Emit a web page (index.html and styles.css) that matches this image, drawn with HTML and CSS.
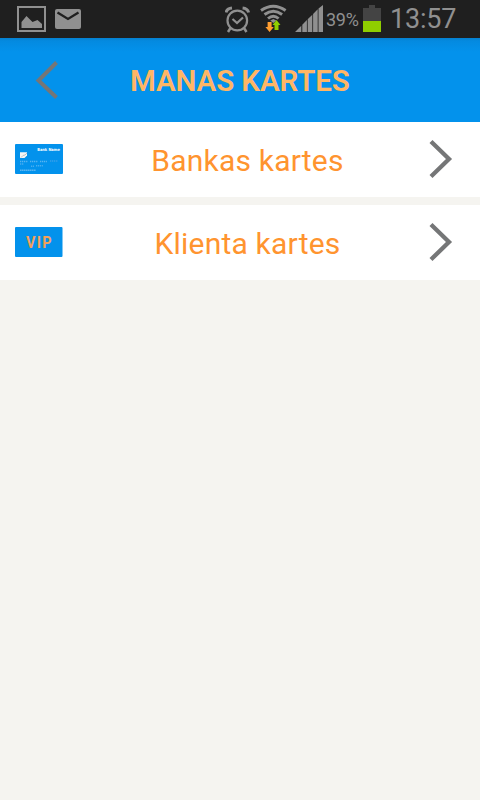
FILE: index.html
```
<!DOCTYPE html>
<html lang="lv">
<head>
  <meta charset="UTF-8">
  <meta name="viewport" content="width=device-width, initial-scale=1.0">
  <title>Manas kartes</title>
  <link rel="stylesheet" href="styles.css">
</head>
<body>
  <div class="status">
    <svg class="picture" width="29" height="38" viewBox="17 0 29 38">
      <rect x="18" y="7" width="27" height="24" fill="none" stroke="#909090" stroke-width="2"/>
      <path d="M21.500 28V22l5-6 6 6 5-2 4.500 4V28z" fill="#909090"/>
    </svg>
    <svg class="mail" width="26" height="38" viewBox="55 0 26 38">
      <rect x="55" y="9" width="26" height="20" rx="2" fill="#909090"/>
      <path d="M57.500 12.500L68 19l10.500-6.500" fill="none" stroke="#1f1f1f" stroke-width="2.300"/>
    </svg>
    <svg class="alarm" width="25" height="38" viewBox="225 0 25 38">
      <g fill="none" stroke="#909090">
        <circle cx="237.300" cy="20.500" r="9.800" stroke-width="2.200"/>
        <path d="M232.500 19l4.500 4 6-5.500" stroke-width="2.200"/>
        <path d="M226 12.500q1-4 6-4.500M248.600 12.500q-1-4-6-4.500" stroke-width="3"/>
        <path d="M230.500 28l-2.500 4M244 28l2.500 4" stroke-width="2.500"/>
      </g>
    </svg>
    <svg class="wifi" width="27" height="38" viewBox="260 0 27 38">
      <g fill="none" stroke="#909090" stroke-width="2.900">
        <path d="M261 10.500q12.300-8.500 24.600 0"/>
        <path d="M264.500 14.500q8.800-6.500 17.600 0"/>
        <path d="M268 18.500q5.300-4.500 10.600 0"/>
      </g>
      <path d="M270.300 20.500l3-1.500 3 1.500-3 2.500z" fill="#909090"/>
      <path d="M267.600 22h4v5h2.200l-4.200 5-4.200-5h2.200z" fill="#ff9d30"/>
      <path d="M274.500 30h4v-5h2l-4-5-4 5h2z" fill="#8fce00"/>
    </svg>
    <svg class="signal" width="28" height="38" viewBox="295 0 28 38">
      <path d="M295 32l6.300-6.300V32zM302.300 24.700l4.600-4.600V32h-4.600zM307.700 19.300l4.600-4.600V32h-4.600zM313.100 13.900l4.600-4.600V32h-4.600zM318.500 8.500L323 5V32h-4.500z" fill="#909090"/>
    </svg>
    <span class="percent">39%</span>
    <svg class="battery" width="18" height="38" viewBox="363 0 18 38">
      <path d="M363 8h6V5h6v3h6v13h-18z" fill="#444"/>
      <path d="M363 21h18v11h-18z" fill="#8fce00"/>
    </svg>
    <span class="time">13:57</span>
  </div>

  <header class="header">
    <svg class="back" width="24" height="40" viewBox="0 0 24 40">
      <path d="M21.500 2.500L3.500 20.500L21.500 37.500" fill="none" stroke="#757677" stroke-width="4"/>
    </svg>
    <h1 class="title">MANAS KARTES</h1>
  </header>

  <main class="list">
    <a class="row">
      <svg class="card" width="48" height="30" viewBox="0 0 48 30">
        <rect width="48" height="30" rx="1" fill="#0392ec"/>
        <text class="bank" x="22.300" y="6.500" textLength="22.500" lengthAdjust="spacingAndGlyphs">Bank Name</text>
        <path d="M5 8.300h7v3.200l-2.500 2.500H5z" fill="#f4f4f4"/>
        <path d="M6 13.500l2-2 2-.5 2-2" fill="none" stroke="#b9c3c9"/>
        <g fill="none" stroke="#58b4f1" stroke-width="1.600">
          <path d="M5 17.500h8M15 17.500h8M25 17.500h7" stroke-dasharray="1.200 .7"/>
          <path d="M35 17h8" stroke="#389fe9" stroke-dasharray="1.200 .7"/>
          <path d="M5 20h4M16 22.200h3M21 21.700h7" stroke="#48adf0" stroke-dasharray="1.200 .7"/>
          <path d="M5 26.300h16" stroke-dasharray="1.600 .4"/>
        </g>
      </svg>
      <span class="name">Bankas kartes</span>
      <svg class="arrow" width="26" height="40" viewBox="0 0 26 40">
        <path d="M2 2.500L20 20L2 37.500" fill="none" stroke="#757677" stroke-width="4.300"/>
      </svg>
    </a>
    <a class="row">
      <svg class="card" width="48" height="30" viewBox="0 0 48 30">
        <rect width="47.500" height="30" rx="1" fill="#0392ec"/>
        <text class="vip" transform="translate(11 21.300) scale(.85 1)">VIP</text>
      </svg>
      <span class="name">Klienta kartes</span>
      <svg class="arrow" width="26" height="40" viewBox="0 0 26 40">
        <path d="M2 2.500L20 20L2 37.500" fill="none" stroke="#757677" stroke-width="4.300"/>
      </svg>
    </a>
  </main>
</body>
</html>
```
FILE: styles.css
```
* { box-sizing: border-box; }
body { font-family: Roboto, sans-serif; background: #f5f4f0; margin: 0; padding: 0; }
svg { display: block; flex: none; }

.status { display: flex; height: 38px; padding-left: 17px; background: #1f1f1f; color: #909090; white-space: nowrap; }
.mail { margin-left: 9px; }
.alarm { margin-left: 144px; }
.wifi { margin-left: 10px; }
.signal { margin-left: 8px; }
.percent { width: 40px; padding: 1px 0 0 3px; font-size: 18px; line-height: 38px; letter-spacing: -0.3px; }
.time { padding-left: 9px; font-size: 27px; line-height: 38px; letter-spacing: -0.2px; }

.header { display: flex; align-items: center; height: 84px; padding-left: 35px; background: linear-gradient(#0580cf, #048ae0 3px, #0392ec 14px); }
.title { margin: 0 0 0 71px; padding-top: 2px; font-size: 29.5px; font-weight: 600; line-height: 82px; letter-spacing: -0.1px; color: #ffb665; white-space: nowrap; }

.list { display: flex; flex-direction: column; gap: 8px; }
.row { display: flex; align-items: center; height: 75px; padding: 0 25px 2px 15px; background: #fff; }
.name { flex: 1; padding: 3px 0 0 3px; font-size: 30px; letter-spacing: 0.2px; text-align: center; color: #ff942f; white-space: nowrap; }
.bank { font-family: "DejaVu Sans", sans-serif; font-size: 4px; font-weight: 700; fill: #fff; }
.vip { font-size: 17px; font-weight: 700; letter-spacing: 1.5px; fill: #f4a15a; }
```
